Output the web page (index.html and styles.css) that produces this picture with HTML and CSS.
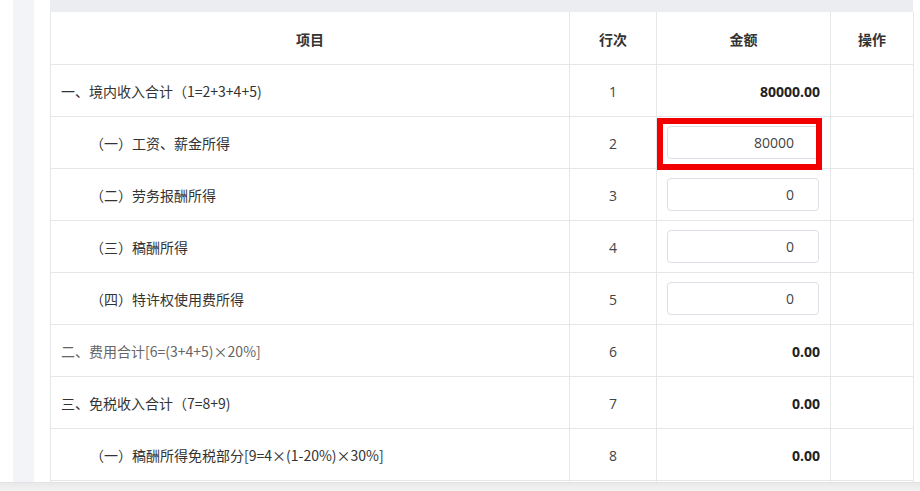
FILE: index.html
```html
<!DOCTYPE html>
<html lang="zh">
<head>
<meta charset="utf-8">
<link rel="stylesheet" href="styles.css">
</head>
<body>
<div class="page">
  <div class="gutter-white"></div>
  <div class="gutter-gray"></div>
  <div class="gutter-white2"></div>
  <div class="main">
    <div class="topband"></div>
    <table class="tbl">
      <colgroup>
        <col class="c1"><col class="c2"><col class="c3"><col class="c4">
      </colgroup>
      <thead>
        <tr><th>项目</th><th>行次</th><th>金额</th><th>操作</th></tr>
      </thead>
      <tbody>
        <tr><td class="name">一、境内收入合计（1=2+3+4+5)</td><td class="num">1</td><td class="amt">80000.00</td><td></td></tr>
        <tr><td class="name sub">（一）工资、薪金所得</td><td class="num">2</td><td class="inp-cell"><div class="highlight-wrap"><div class="inp">80000</div><div class="highlight"></div></div></td><td></td></tr>
        <tr><td class="name sub">（二）劳务报酬所得</td><td class="num">3</td><td class="inp-cell"><div class="inp">0</div></td><td></td></tr>
        <tr><td class="name sub">（三）稿酬所得</td><td class="num">4</td><td class="inp-cell"><div class="inp">0</div></td><td></td></tr>
        <tr><td class="name sub">（四）特许权使用费所得</td><td class="num">5</td><td class="inp-cell"><div class="inp">0</div></td><td></td></tr>
        <tr><td class="name light">二、费用合计[6=(3+4+5)×20%]</td><td class="num">6</td><td class="amt">0.00</td><td></td></tr>
        <tr><td class="name">三、免税收入合计（7=8+9)</td><td class="num">7</td><td class="amt">0.00</td><td></td></tr>
        <tr><td class="name sub">（一）稿酬所得免税部分[9=4×(1-20%)×30%]</td><td class="num">8</td><td class="amt">0.00</td><td></td></tr>
        <tr><td class="name sub"></td><td class="num"></td><td class="amt"></td><td></td></tr>
      </tbody>
    </table>
  </div>
</div>
<div class="bottombar"></div>
</body>
</html>
```

FILE: styles.css
```css
html, body {
  margin: 0;
  padding: 0;
  background: #fff;
  overflow: hidden;
  height: 491px;
}
body {
  font-family: "Open Sans", "Noto Sans CJK SC", sans-serif;
  font-size: 14px;
  color: #333;
}
.page {
  display: flex;
  height: 491px;
  overflow: hidden;
}
.gutter-white { width: 13px; background: #fff; }
.gutter-gray { width: 21px; background: #f3f4f7; }
.gutter-white2 { width: 16px; background: #fff; }
.main {
  width: 863px;
  display: flex;
  flex-direction: column;
}
.topband {
  height: 12px;
  background: #ebedf0;
  flex: none;
}
.tbl {
  border-collapse: collapse;
  table-layout: fixed;
  width: 863px;
  border-left: 1px solid #e5e6e8;
  border-right: 1px solid #e5e6e8;
}
.c1 { width: 519px; }
.c2 { width: 87px; }
.c3 { width: 174px; }
.c4 { width: 83px; }
.tbl th, .tbl td {
  border: 1px solid #e5e6e8;
  height: 52px;
  padding: 0;
  box-sizing: border-box;
}
.tbl th {
  font-weight: bold;
  text-align: center;
  color: #333;
  font-family: "Noto Sans CJK SC", sans-serif;
  padding-top: 3px;
}
.tbl thead tr th { border-top: 0; }
.name {
  padding-left: 10px !important;
  padding-top: 2px !important;
  font-family: "Noto Sans CJK SC", sans-serif;
  color: #333;
  white-space: nowrap;
}
.name.sub { padding-left: 39px !important; }
.name.light { color: #666; }
.num { text-align: center; color: #444; padding-top: 2px !important; }
.amt {
  text-align: right;
  font-weight: bold;
  padding-right: 10px !important;
  padding-top: 2px !important;
  color: #222;
}
.inp-cell { padding-left: 10px !important; }
.inp {
  width: 152px;
  height: 33px;
  box-sizing: border-box;
  border: 1px solid #dcdfe6;
  border-radius: 4px;
  text-align: right;
  padding-right: 24px;
  line-height: 31px;
  color: #444;
  background: #fff;
}
.highlight-wrap { position: relative; width: 152px; }
.highlight {
  position: absolute;
  left: -10px;
  top: -8px;
  width: 165px;
  height: 52px;
  box-sizing: border-box;
  border: 6px solid #f20000;
}
.bottombar {
  position: fixed;
  left: 0;
  right: 0;
  bottom: 0;
  height: 8px;
  background: linear-gradient(#e9e9e9, #f3f3f3);
  border-top: 1px solid #e2e2e2;
}
```
